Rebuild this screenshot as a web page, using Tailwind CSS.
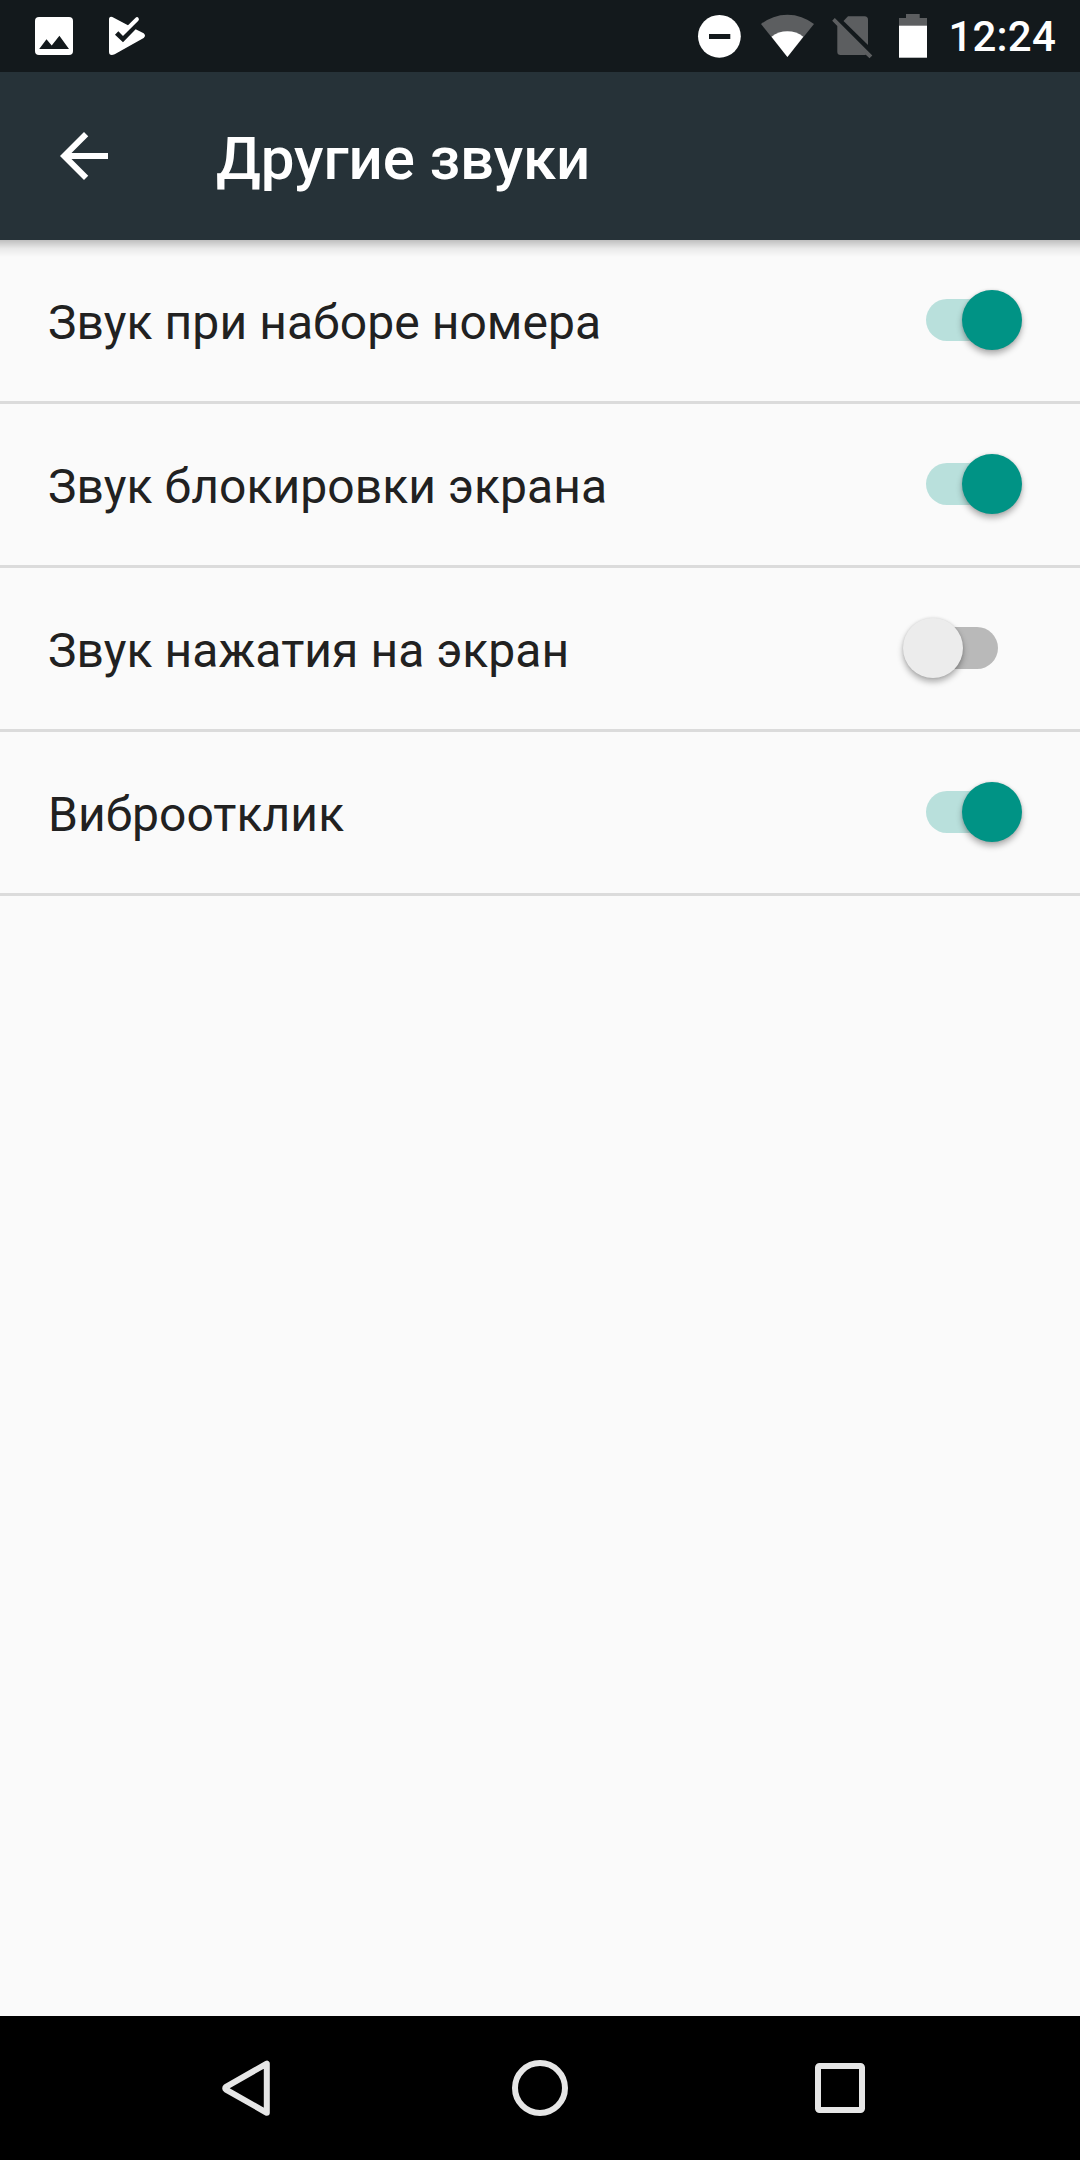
<!DOCTYPE html>
<html lang="ru">
<head>
<meta charset="utf-8">
<title>Другие звуки</title>
<script src="https://cdn.jsdelivr.net/npm/@tailwindcss/browser@4"></script>
</head>
<body class="flex h-[2160px] w-[1080px] flex-col overflow-hidden bg-[#fafafa] font-['Roboto',sans-serif] text-[#212121]">

<!-- Status bar -->
<div class="flex h-[72px] shrink-0 items-center justify-between bg-[#13191c] pr-6 pl-[33px] text-white">
  <div class="flex gap-8">
    <svg class="h-[72px] w-[42px]" viewBox="33 0 42 72" fill="none">
      <rect x="35" y="17" width="38" height="38" rx="4" fill="#fff"/>
      <path d="M39.2 49L46.5 39.3L51.7 45.5L59.4 35.8L69 49Z" fill="#13191c"/>
    </svg>
    <svg class="h-[72px] w-[42px]" viewBox="321 0 126 216" fill="#fff">
      <path d="M337 51L384 76L406 54Q411 49 415 53Q419 58 415 62L369 108L355 94L345 104L369 127L407 88L431 100Q439 107 431 114L344 163Q327 169 327 155V59Q327 48 337 51Z"/>
    </svg>
  </div>
  <div class="flex items-center">
    <svg class="h-[72px] w-[251px]" viewBox="697 0 251 72">
      <circle cx="719.4" cy="36.3" r="21.4" fill="#fff"/>
      <rect x="709" y="34" width="21.3" height="5" fill="#13191c"/>
      <path d="M787.4 57L761 24A42.7 42.7 0 0 1 814 24Z" fill="#5c5e60"/>
      <path d="M787.4 57L771.5 36.7A26 26 0 0 1 803.3 36.7Z" fill="#fff"/>
      <path d="M848 16.3H864.5Q868 16.3 868 19.8V45L843.5 21Z" fill="#5c5e60"/>
      <path d="M834.8 18L872.3 55.6L869.5 58.3L865.8 54.7Q865 55 864 55H840.6Q837.3 55 837.3 51.7V26L832.2 20.7Z" fill="#5c5e60"/>
      <path d="M899 26V18H906V14H919.7V18H927V26Z" fill="#5c5e60"/>
      <rect x="899" y="25.7" width="28" height="32" fill="#fff"/>
    </svg>
    <span class="pt-0.5 text-[42px] leading-none font-medium tracking-[0.2px]">12:24</span>
  </div>
</div>

<!-- App bar -->
<header class="relative flex h-[168px] shrink-0 items-center bg-[#263238] pl-12 text-white">
  <svg class="size-[72px]" viewBox="0 0 24 24" fill="currentColor"><path d="M20 11H7.83l5.59-5.59L12 4l-8 8 8 8 1.41-1.41L7.83 13H20v-2z"/></svg>
  <h1 class="pt-[5px] pl-24 text-[60px] leading-none font-medium tracking-[-0.1px]">Другие звуки</h1>
  <div class="absolute inset-x-0 top-full h-[17px] bg-linear-to-b from-black/24 via-black/7 to-transparent"></div>
</header>

<!-- Settings list -->
<main class="flex-1">
  <div class="flex h-[164px] items-center justify-between border-b-3 border-[#dbdbdb] pr-[82px] pb-px pl-12">
    <span class="pt-[5px] text-5xl leading-none tracking-[0.07px]">Звук при наборе номера</span>
    <div class="relative h-[42px] w-[72px] rounded-full bg-[#b9e0dc]"><div class="absolute -top-[9px] left-[35.5px] size-[60px] rounded-full bg-[#009385] shadow-[0_4px_6px_rgba(0,0,0,0.3),0_0_3px_rgba(0,0,0,0.12)]"></div></div>
  </div>
  <div class="flex h-[164px] items-center justify-between border-b-3 border-[#dbdbdb] pr-[82px] pb-px pl-12">
    <span class="pt-[5px] text-5xl leading-none tracking-[0.07px]">Звук блокировки экрана</span>
    <div class="relative h-[42px] w-[72px] rounded-full bg-[#b9e0dc]"><div class="absolute -top-[9px] left-[35.5px] size-[60px] rounded-full bg-[#009385] shadow-[0_4px_6px_rgba(0,0,0,0.3),0_0_3px_rgba(0,0,0,0.12)]"></div></div>
  </div>
  <div class="flex h-[164px] items-center justify-between border-b-3 border-[#dbdbdb] pr-[82px] pb-px pl-12">
    <span class="pt-[5px] text-5xl leading-none tracking-[0.07px]">Звук нажатия на экран</span>
    <div class="relative h-[42px] w-[72px] rounded-full bg-[#b9b9b9]"><div class="absolute -top-[9px] -left-[23.5px] size-[60px] rounded-full bg-[#ececec] shadow-[0_4px_6px_rgba(0,0,0,0.3),0_0_3px_rgba(0,0,0,0.12)]"></div></div>
  </div>
  <div class="flex h-[164px] items-center justify-between border-b-3 border-[#dbdbdb] pr-[82px] pb-px pl-12">
    <span class="pt-[5px] text-5xl leading-none tracking-[0.07px]">Виброотклик</span>
    <div class="relative h-[42px] w-[72px] rounded-full bg-[#b9e0dc]"><div class="absolute -top-[9px] left-[35.5px] size-[60px] rounded-full bg-[#009385] shadow-[0_4px_6px_rgba(0,0,0,0.3),0_0_3px_rgba(0,0,0,0.12)]"></div></div>
  </div>
</main>

<!-- Navigation bar -->
<nav class="flex h-36 shrink-0 items-center justify-center gap-[228px] bg-black">
  <svg class="size-[72px]" viewBox="204 2052 72 72" fill="none" stroke="#e6e6e6" stroke-width="6" stroke-linejoin="round"><path d="M266.8 2063.6V2112.8L226 2089.6Q224.4 2088.2 226 2086.8Z"/></svg>
  <svg class="size-[72px]" viewBox="0 0 72 72" fill="none" stroke="#e6e6e6" stroke-width="6"><circle cx="36" cy="36" r="25"/></svg>
  <svg class="size-[72px]" viewBox="0 0 72 72" fill="none" stroke="#e6e6e6" stroke-width="6"><rect x="14" y="14" width="44" height="44" rx="1.5"/></svg>
</nav>
</body>
</html>
